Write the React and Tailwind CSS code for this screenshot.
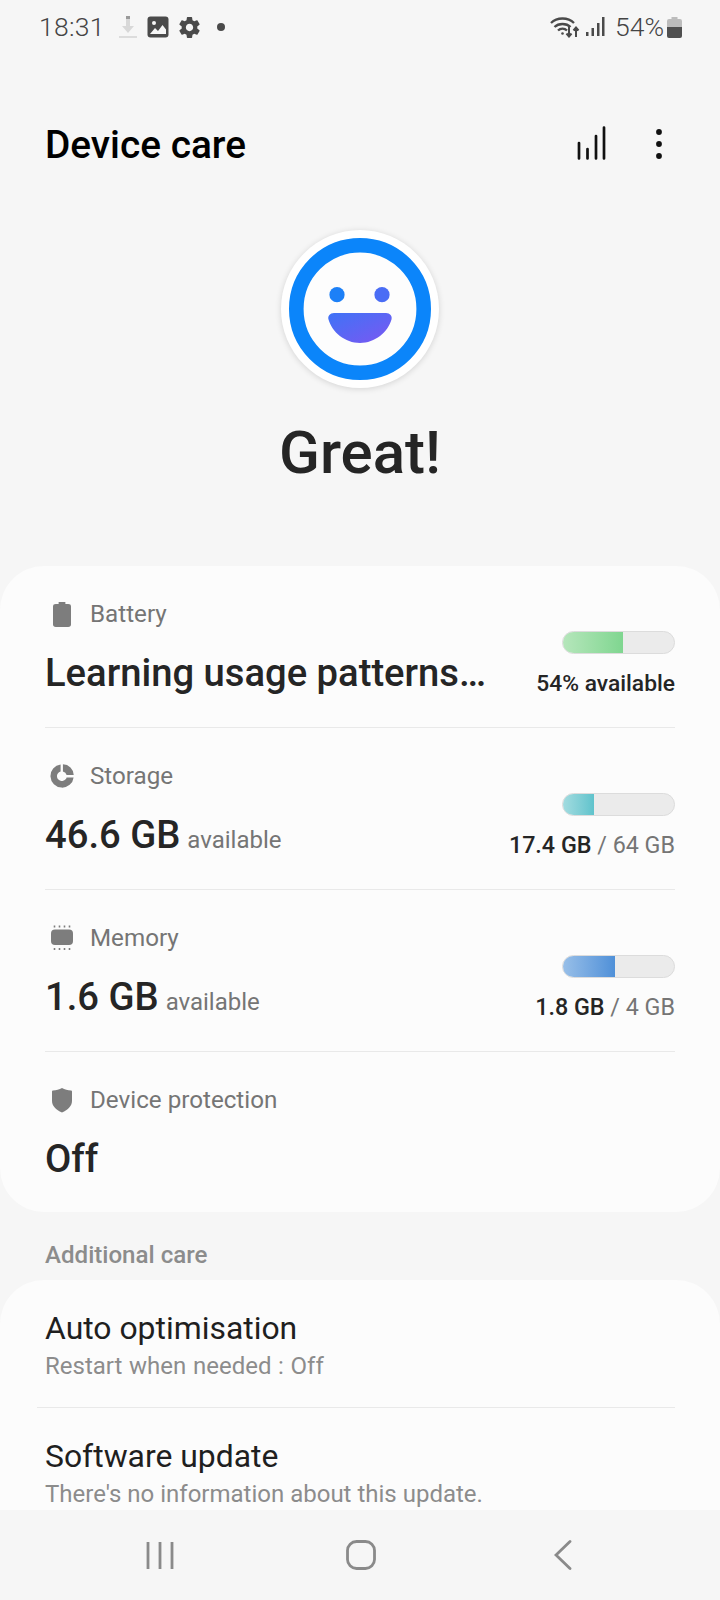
import React from 'react';

const BatteryIcon = () => (
    <svg width="18" height="25" viewBox="1 0 16 25.5" preserveAspectRatio="none"><path d="M6 0h6v2h2.500A2.500 2.500 0 0 1 17 4.500V23a2.500 2.500 0 0 1-2.500 2.500h-11A2.500 2.500 0 0 1 1 23V4.500A2.500 2.500 0 0 1 3.500 2H6z" fill="#7d7d7d" /></svg>
);

const StorageIcon = () => (
    <svg width="24" height="24" viewBox="0 0 26 26">
        <path d="M11.500 .5V8a5.300 5.300 0 1 0 6.500 6.500h7.600A12.600 12.600 0 1 1 11.500 .5z" fill="#7d7d7d" />
        <path d="M14 .3A12 12 0 0 1 25.700 12H18a5.200 5.200 0 0 0-4-4z" fill="#7d7d7d" />
    </svg>
);

const MemoryIcon = () => (
    <svg width="22" height="26" viewBox="1 0 22 26">
        <rect x="1" y="4.500" width="22" height="15.500" rx="4" fill="#7d7d7d" />
        <path d="M4.500 0.500v2M9.500 0.500v2M14.500 0.500v2M19.500 0.500v2M4.500 23v2M9.500 23v2M14.500 23v2M19.500 23v2" stroke="#7d7d7d" strokeWidth="1.600" />
    </svg>
);

const ShieldIcon = () => (
    <svg width="20" height="25" viewBox="0.6 .5 20.8 25.5" preserveAspectRatio="none"><path d="M11 .5c2.800 1.500 6 2.300 9.500 2.600.6 0 .9.400.9 1v9.400c0 5.300-4 9.300-10.400 12-6.400-2.700-10.400-6.700-10.400-12V4.100c0-.6.300-1 .9-1C5 2.800 8.200 2 11 .5z" fill="#7d7d7d" /></svg>
);

const UsageBar = ({ fill, from, to }) => (
    <div className="w-[113px] h-[23px] rounded-full bg-[#ebebeb] border border-[#dcdcdc] overflow-hidden">
        <div className={`h-full bg-gradient-to-r ${from} ${to} ${fill}`} />
    </div>
);

const Row = ({ icon, label, value, unit, right, bar, divider }) => (
    <div className={`mx-[45px] pt-[34px] ${divider ? 'h-[162px] border-b border-[#e9e9e9]' : 'h-[160px]'}`}>
        <div className="flex items-center h-[28px]">
            <div className="w-[34px] mr-[11px] flex items-center justify-center">{icon}</div>
            <span className="text-[24.200px] text-[#757575]">{label}</span>
        </div>
        <div className="flex justify-between items-start">
            <div className="flex items-baseline mt-[20px] h-[50px]">
                <span className="text-[38.200px] font-medium text-[#252525] leading-[50px]">{value}</span>
                {unit && <span className="text-[24px] text-[#757575] ml-[7px]">{unit}</span>}
            </div>
            {bar && (
                <div className="flex flex-col items-end mt-[3px]">
                    {bar}
                    <div className="text-[23.300px] mt-[14px] leading-[30px] text-[#757575]">{right}</div>
                </div>
            )}
        </div>
    </div>
);

export default function App() {
    return (
        <div className="w-[720px] h-[1600px] bg-[#f6f6f6] overflow-hidden flex flex-col font-['Roboto',sans-serif]">
            {/* status bar */}
            <div className="h-[54px] flex items-center justify-between pl-[39px] pr-[38px] text-[#4f4f4f] shrink-0">
                <div className="flex items-center">
                    <span className="text-[26.500px] font-light tracking-[0.3px] text-[#444]">18:31</span>
                    <svg className="ml-[13px]" width="20" height="24" viewBox="0 0 20 24">
                        <path d="M8 1h4v10h4l-6 7-6-7h4z" fill="#d8d8d8" />
                        <path d="M8 1h4v3H8z" fill="#9a9a9a" />
                        <path d="M1 22h18" stroke="#dcdcdc" strokeWidth="2" />
                    </svg>
                    <svg className="ml-[9px]" width="22" height="22" viewBox="0 0 22 22">
                        <rect width="21" height="21" x=".5" y=".5" rx="3" fill="#4a4a4a" />
                        <circle cx="7" cy="7" r="2" fill="#f6f6f6" />
                        <path d="M3 18l5-6 3 3 4.500-6L19 13.500V18z" fill="#f6f6f6" />
                    </svg>
                    <svg className="ml-[8px]" width="25" height="25" viewBox="0 0 24 24">
                        <path fill="#4a4a4a" d="M19.430 12.980c.04-.32.070-.64.070-.98s-.03-.660-.070-.980l2.110-1.650c.190-.150.240-.420.120-.640l-2-3.460c-.120-.220-.390-.300-.610-.220l-2.490 1c-.520-.400-1.080-.730-1.690-.980l-.380-2.650C14.460 2.180 14.250 2 14 2h-4c-.250 0-.460.180-.490.420l-.380 2.650c-.610.250-1.170.590-1.690.980l-2.490-1c-.230-.090-.490 0-.610.220l-2 3.460c-.130.220-.070.490.120.640l2.110 1.650c-.040.320-.070.650-.070.980s.030.660.070.980l-2.110 1.650c-.190.150-.240.420-.120.640l2 3.460c.120.220.390.300.610.220l2.490-1c.520.400 1.080.730 1.690.980l.380 2.650c.030.240.240.420.490.420h4c.250 0 .460-.180.490-.420l.380-2.650c.610-.250 1.170-.590 1.690-.980l2.490 1c.230.090.490 0 .610-.220l2-3.460c.120-.220.070-.490-.120-.640l-2.110-1.650zM12 15.500c-1.930 0-3.500-1.570-3.500-3.500s1.570-3.500 3.500-3.500 3.500 1.570 3.500 3.500-1.570 3.500-3.500 3.500z" />
                    </svg>
                    <div className="ml-[15px] w-[8px] h-[8px] rounded-full bg-[#4a4a4a]" />
                </div>
                <div className="flex items-center">
                    <svg width="30" height="22" viewBox="0 0 30 22" fill="none" stroke="#4a4a4a" strokeWidth="2.300">
                        <path d="M1 7c6-6 17-6 23 0M4.500 11c4-4 12-4 16 0M8 14.500c2.500-2.500 6.500-2.500 9 0" />
                        <circle cx="12.500" cy="17.500" r="1.300" fill="#4a4a4a" stroke="none" />
                        <path d="M19 11v9M16.500 17.500l2.500 3 2.500-3M26 21v-9M23.500 14.500l2.500-3 2.500 3" strokeWidth="2" />
                    </svg>
                    <svg className="ml-[6px]" width="19" height="20" viewBox="0 0 19 20" fill="#4a4a4a">
                        <rect x="0" y="15" width="2.500" height="4" /><rect x="5.500" y="11" width="2.500" height="8" />
                        <rect x="11" y="6" width="2.500" height="13" /><rect x="16" y="0" width="2.500" height="19" />
                    </svg>
                    <span className="ml-[10px] text-[26.500px] font-light text-[#444]">54%</span>
                    <svg className="ml-[3px]" width="15" height="21" viewBox="0 0 15 21">
                        <path d="M4.500 0h6v2H13a2 2 0 0 1 2 2v6H0V4a2 2 0 0 1 2-2h2.500z" fill="#bcbcbc" />
                        <path d="M0 10h15v9a2 2 0 0 1-2 2H2a2 2 0 0 1-2-2z" fill="#4f4f4f" />
                    </svg>
                </div>
            </div>

            {/* title row */}
            <div className="h-[64px] mt-[59px] flex items-center justify-between pl-[45px] pr-[57px] shrink-0">
                <span className="text-[38.800px] font-medium text-black">Device care</span>
                <div className="flex items-center">
                    <svg className="mb-[4px]" width="29" height="34" viewBox="0 0 29 34" stroke="#111" strokeWidth="2.700" strokeLinecap="round">
                        <path d="M2 17v15.500M10.500 23v9.500M19 10v22.500M27 1.500v31" />
                    </svg>
                    <svg className="ml-[49px] mb-[2px]" width="8" height="32" viewBox="0 0 8 32" fill="#111">
                        <circle cx="4" cy="4" r="2.900" /><circle cx="4" cy="16" r="2.900" /><circle cx="4" cy="28" r="2.900" />
                    </svg>
                </div>
            </div>

            {/* score */}
            <div className="flex flex-col items-center mt-[53px] shrink-0">
                <div className="w-[158px] h-[158px] rounded-full bg-white shadow-[0_1px_6px_rgba(0,0,0,0.14)] flex items-center justify-center">
                    <svg width="142" height="142" viewBox="0 0 142 142">
                        <defs>
                            <linearGradient id="smile" x1="0" y1="0" x2="1" y2="1">
                                <stop offset="0" stopColor="#3f73f6" />
                                <stop offset="1" stopColor="#7b57f2" />
                            </linearGradient>
                        </defs>
                        <circle cx="71" cy="71" r="63.700" fill="#fdfdfd" stroke="#0b85fa" strokeWidth="14.600" />
                        <circle cx="48" cy="56.700" r="7.600" fill="#1d80f7" />
                        <circle cx="93" cy="56.700" r="7.600" fill="#4a6df5" />
                        <path d="M45 75h52c4 0 6.500 3 5.500 6.500C99 94 86 105 71 105S43 94 39.500 81.500C38.500 78 41 75 45 75z" fill="url(#smile)" />
                    </svg>
                </div>
                <div className="text-[60px] font-medium text-[#252525] leading-[70px] mt-[30px]">Great!</div>
            </div>

            {/* main card */}
            <div className="mt-[78px] bg-[#fcfcfc] rounded-[44px] shrink-0">
                <Row
                    divider
                    icon={<BatteryIcon />}
                    label="Battery"
                    value="Learning usage patterns…"
                    bar={<UsageBar fill="w-[54%]" from="from-[#b5e6bb]" to="to-[#7fd690]" />}
                    right={<span className="font-medium text-[22.800px] text-[#252525]">54% available</span>}
                />
                <Row
                    divider
                    icon={<StorageIcon />}
                    label="Storage"
                    value="46.6 GB"
                    unit="available"
                    bar={<UsageBar fill="w-[28%]" from="from-[#a2dce0]" to="to-[#5fc3cc]" />}
                    right={<><span className="font-medium text-[#252525]">17.4 GB</span> / 64 GB</>}
                />
                <Row
                    divider
                    icon={<MemoryIcon />}
                    label="Memory"
                    value="1.6 GB"
                    unit="available"
                    bar={<UsageBar fill="w-[47%]" from="from-[#98bfe8]" to="to-[#4f90d8]" />}
                    right={<><span className="font-medium text-[#252525]">1.8 GB</span> / 4 GB</>}
                />
                <Row icon={<ShieldIcon />} label="Device protection" value="Off" />
            </div>

            {/* additional care */}
            <div className="ml-[45px] mt-[27px] h-[32px] text-[24.100px] font-medium text-[#8c8c8c] leading-[32px] shrink-0">Additional care</div>
            <div className="mt-[9px] flex-1 min-h-0 bg-[#fcfcfc] rounded-t-[44px] overflow-hidden">
                <div className="pl-[45px] pt-[29px] pr-[45px]">
                    <div className="text-[31.900px] text-[#1f1f1f] leading-[38px]">Auto optimisation</div>
                    <div className="text-[24px] [word-spacing:0.7px] text-[#8c8c8c] leading-[30px] mt-[4px]">Restart when needed : Off</div>
                </div>
                <div className="ml-[37px] mr-[45px] mt-[26px] border-b border-[#e9e9e9]" />
                <div className="pl-[45px] pt-[29px] pr-[45px]">
                    <div className="text-[31.900px] text-[#1f1f1f] leading-[38px]">Software update</div>
                    <div className="text-[24px] text-[#8c8c8c] leading-[30px] mt-[4px]">There's no information about this update.</div>
                </div>
            </div>

            {/* nav bar */}
            <div className="h-[90px] shrink-0 bg-[#f6f6f6] flex items-center pl-[146px]">
                <svg width="28" height="30" viewBox="0 0 28 30" stroke="#8a8a8a" strokeWidth="2.800">
                    <path d="M2 2v27M14 2v27M26 2v27" />
                </svg>
                <svg className="ml-[172px]" width="30" height="30" viewBox="0 0 30 30" fill="none" stroke="#8a8a8a" strokeWidth="2.800">
                    <rect x="1.500" y="1.500" width="27" height="27" rx="9" />
                </svg>
                <svg className="ml-[178px]" width="18" height="30" viewBox="0 0 18 30" fill="none" stroke="#8a8a8a" strokeWidth="2.800" strokeLinecap="round">
                    <path d="M16 1.500L2 15l14 13.500" />
                </svg>
            </div>
        </div>
    );
}
